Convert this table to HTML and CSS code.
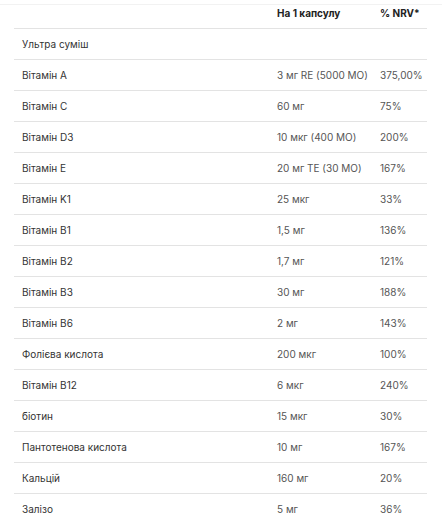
FILE: index.html
```html
<!DOCTYPE html>
<html lang="uk">
<head>
<meta charset="utf-8">
<link rel="stylesheet" href="styles.css">
</head>
<body>
<div class="topline"></div>
<div class="table">
  <div class="row head">
    <div class="c1"></div>
    <div class="c2">На 1 капсулу</div>
    <div class="c3">% NRV*</div>
  </div>
  <div class="row"><div class="c1">Ультра суміш</div><div class="c2"></div><div class="c3"></div></div>
  <div class="row"><div class="c1">Вітамін A</div><div class="c2">3 мг RE (5000 МО)</div><div class="c3">375,00%</div></div>
  <div class="row"><div class="c1">Вітамін C</div><div class="c2">60 мг</div><div class="c3">75%</div></div>
  <div class="row"><div class="c1">Вітамін D3</div><div class="c2">10 мкг (400 МО)</div><div class="c3">200%</div></div>
  <div class="row"><div class="c1">Вітамін E</div><div class="c2">20 мг TE (30 МО)</div><div class="c3">167%</div></div>
  <div class="row"><div class="c1">Вітамін K1</div><div class="c2">25 мкг</div><div class="c3">33%</div></div>
  <div class="row"><div class="c1">Вітамін B1</div><div class="c2">1,5 мг</div><div class="c3">136%</div></div>
  <div class="row"><div class="c1">Вітамін B2</div><div class="c2">1,7 мг</div><div class="c3">121%</div></div>
  <div class="row"><div class="c1">Вітамін B3</div><div class="c2">30 мг</div><div class="c3">188%</div></div>
  <div class="row"><div class="c1">Вітамін B6</div><div class="c2">2 мг</div><div class="c3">143%</div></div>
  <div class="row"><div class="c1">Фолієва кислота</div><div class="c2">200 мкг</div><div class="c3">100%</div></div>
  <div class="row"><div class="c1">Вітамін B12</div><div class="c2">6 мкг</div><div class="c3">240%</div></div>
  <div class="row"><div class="c1">біотин</div><div class="c2">15 мкг</div><div class="c3">30%</div></div>
  <div class="row"><div class="c1">Пантотенова кислота</div><div class="c2">10 мг</div><div class="c3">167%</div></div>
  <div class="row"><div class="c1">Кальцій</div><div class="c2">160 мг</div><div class="c3">20%</div></div>
  <div class="row"><div class="c1">Залізо</div><div class="c2">5 мг</div><div class="c3">36%</div></div>
</div>
</body>
</html>
```
FILE: styles.css
```css
html, body {
  margin: 0;
  padding: 0;
  background: #fff;
}
body {
  font-family: Inter, Roboto, "Noto Sans", sans-serif;
  font-size: 10px;
  color: #333;
  overflow: hidden;
}
.topline {
  height: 4px;
  border-bottom: 1px solid #f2f2f2;
}
.table {
  margin: 0 15px 0 14px;
}
.row {
  display: grid;
  grid-template-columns: 263px 103px 1fr;
  height: 31px;
  align-items: center;
  border-top: 1px solid #e3e3e3;
  box-sizing: border-box;
}
.row .c1 {
  padding-left: 8px;
}
.row.head {
  border-top: none;
  height: 23px;
  align-items: start;
  padding-top: 2px;
  font-weight: 700;
  color: #222;
}
.c2, .c3 {
  color: #555;
  white-space: nowrap;
}
.head .c2, .head .c3 {
  color: #222;
}
```
